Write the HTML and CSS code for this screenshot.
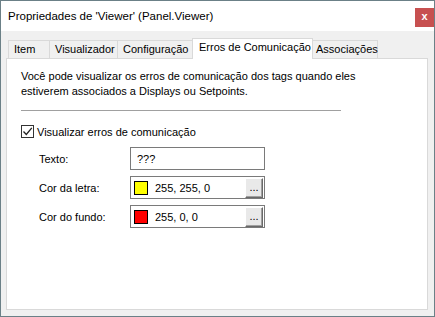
FILE: index.html
```html
<!DOCTYPE html>
<html lang="pt">
<head>
<meta charset="utf-8">
<title>Propriedades</title>
<link rel="stylesheet" href="styles.css">
</head>
<body>
<div class="window">
  <div class="titlebar">
    <span class="title">Propriedades de 'Viewer' (Panel.Viewer)</span>
    <div class="close">x</div>
  </div>
  <div class="body">
    <div class="tabs">
      <div class="tab t-item">Item</div>
      <div class="tab t-vis">Visualizador</div>
      <div class="tab t-conf">Configuração</div>
      <div class="tab t-err active">Erros de Comunicação</div>
      <div class="tab t-assoc last">Associações</div>
    </div>
    <div class="panel">
      <p class="desc">Você pode visualizar os erros de comunicação dos tags quando eles<br>estiverem associados a Displays ou Setpoints.</p>
      <div class="sep"></div>
      <div class="check">
        <span class="box"><svg width="11" height="11" viewBox="0 0 11 11"><path d="M1.5 5.5 L4.3 8.5 L9.8 1.8" fill="none" stroke="#222" stroke-width="1.3"/></svg></span>
        <span>Visualizar erros de comunicação</span>
      </div>
      <div class="form">
        <span class="lbl">Texto:</span>
        <div class="field"><span class="val">???</span></div>
        <span class="lbl">Cor da letra:</span>
        <div class="field color"><span class="swatch yellow"></span><span class="val">255, 255, 0</span><span class="btn">...</span></div>
        <span class="lbl">Cor do fundo:</span>
        <div class="field color"><span class="swatch red"></span><span class="val">255, 0, 0</span><span class="btn">...</span></div>
      </div>
    </div>
  </div>
</div>
</body>
</html>
```
FILE: styles.css
```css
html, body {
  margin: 0;
  padding: 0;
}
body {
  font-family: "Liberation Sans", Arial, sans-serif;
  font-size: 11px;
  color: #000;
  background: #f0f0f0;
}
.window {
  width: 435px;
  height: 317px;
  box-sizing: border-box;
  border: 1px solid #6b8087;
  display: flex;
  flex-direction: column;
  background: #f0f0f0;
}
.titlebar {
  height: 30px;
  background: #fff;
  display: flex;
  justify-content: space-between;
  align-items: flex-start;
  padding-left: 7px;
}
.title {
  font-size: 11.5px;
  line-height: 30px;
}
.close {
  width: 19px;
  height: 19px;
  margin-top: 7px;
  background: #c75050;
  color: #fff;
  font-weight: bold;
  font-size: 11px;
  line-height: 17px;
  text-align: center;
}
.body {
  flex: 1;
  display: flex;
  flex-direction: column;
  padding: 7px 6px 6px 5px;
}
.tabs {
  display: flex;
  align-items: flex-end;
  height: 20px;
  padding-left: 2px;
}
.tab {
  height: 18px;
  box-sizing: border-box;
  border: 1px solid #d9d9d9;
  border-right: none;
  border-bottom: none;
  padding: 0 0 0 5px;
  line-height: 17px;
  white-space: nowrap;
  background: #f0f0f0;
}
.t-item { width: 41px; }
.t-vis { width: 68px; }
.t-conf { width: 77px; }
.t-err { width: 121px; }
.t-assoc { width: 67px; padding-left: 4px; }
.tab.last {
  border-right: 1px solid #d9d9d9;
}
.tab.active {
  position: relative;
  z-index: 1;
  height: 21px;
  margin: 0 -2px -1px -2px;
  padding-left: 6px;
  background: #fff;
  border-right: 1px solid #d9d9d9;
  line-height: 17px;
}
.panel {
  flex: 1;
  background: #fff;
  border: 1px solid #d9d9d9;
  padding: 10px 14px 0 14px;
}
.desc {
  margin: 0;
  line-height: 15px;
}
.sep {
  width: 320px;
  height: 1px;
  background: #a0a0a0;
  margin-top: 11px;
}
.check {
  display: flex;
  align-items: center;
  margin-top: 14px;
  height: 13px;
}
.box {
  width: 13px;
  height: 13px;
  box-sizing: border-box;
  border: 1px solid #333;
  display: flex;
  align-items: center;
  justify-content: center;
  margin-right: 3px;
}
.box svg {
  display: block;
}
.form {
  display: grid;
  grid-template-columns: 91px 135px;
  row-gap: 6px;
  margin-top: 9px;
  padding-left: 18px;
  align-items: center;
}
.field {
  height: 23px;
  box-sizing: border-box;
  border: 1px solid #7a7a7a;
  display: flex;
  align-items: center;
  padding-left: 6px;
}
.field.color {
  padding-left: 3px;
  padding-right: 1px;
}
.swatch {
  width: 14px;
  height: 14px;
  box-sizing: border-box;
  border: 1px solid #000;
  margin-right: 7px;
}
.yellow { background: #ffff00; }
.red { background: #ff0000; }
.val {
  flex: 1;
}
.btn {
  width: 18px;
  height: 20px;
  box-sizing: border-box;
  background: #e9e9e9;
  border-top: 1px solid #fff;
  border-left: 1px solid #fff;
  border-right: 1px solid #696969;
  border-bottom: 1px solid #696969;
  box-shadow: inset -1px -1px 0 #a0a0a0;
  text-align: center;
  line-height: 16px;
  font-size: 11px;
}
```
